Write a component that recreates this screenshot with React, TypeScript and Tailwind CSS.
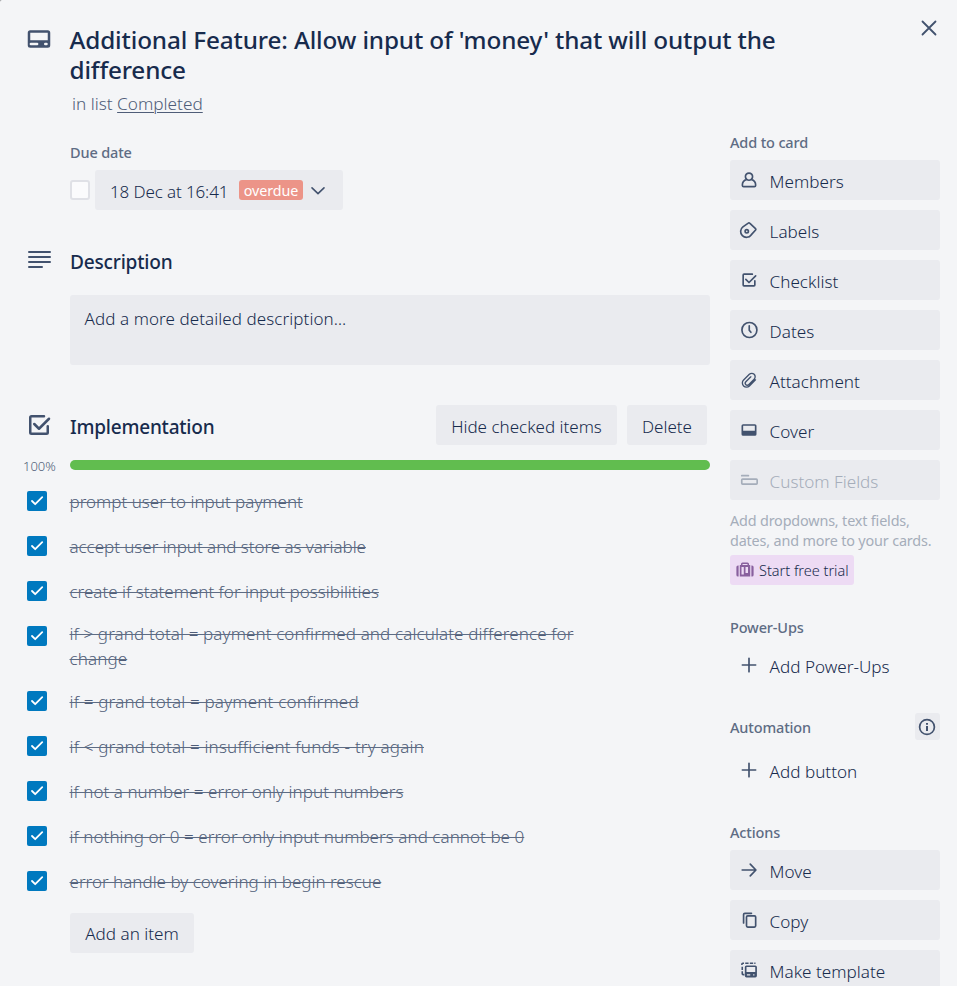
import type { ReactNode } from "react";

type IconProps = { size?: number; children: ReactNode; className?: string };

function Icon({ size = 20, children, className = "" }: IconProps) {
  return (
    <svg
      width={size}
      height={size}
      viewBox="0 0 24 24"
      fill="none"
      stroke="currentColor"
      strokeWidth="2"
      strokeLinecap="round"
      strokeLinejoin="round"
      className={"shrink-0 " + className}
    >
      {children}
    </svg>
  );
}

const cardShape = (
  <path
    fill="currentColor"
    stroke="none"
    fillRule="evenodd"
    d="M5 5h14a2 2 0 0 1 2 2v10a2 2 0 0 1-2 2H5a2 2 0 0 1-2-2V7a2 2 0 0 1 2-2zM5 7v6h14V7H5zM5.500 15a.9.9 0 0 0 0 2h5a.9.9 0 0 0 0-2h-5zM17 15a1 1 0 0 0 0 2h1a1 1 0 0 0 0-2h-1z"
  />
);

const checklistShape = (
  <>
    <path d="M16 5H6a1 1 0 0 0-1 1v12a1 1 0 0 0 1 1h12a1 1 0 0 0 1-1v-5" />
    <path d="M8.200 11.200l3.800 3.800 8-8" />
  </>
);

const icons = {
  members: (
    <path d="M9.300 11.300a4.300 4.300 0 1 1 5.400 0c3 .9 5.300 3.600 5.300 6.900 0 1-.6 1.800-1.600 1.800H5.600c-1 0-1.600-.8-1.600-1.800 0-3.300 2.300-6 5.300-6.900zm0 0c.8.7 1.700 1 2.700 1s1.900-.3 2.700-1" />
  ),
  labels: (
    <>
      <path d="M11.100 3.700a1.200 1.200 0 0 1 1.700 0l7 6.600a1.200 1.200 0 0 1 .1 1.700l-5.300 5.900a7 7 0 1 1-9.900-9.700z" />
      <circle cx="9.300" cy="13.600" r="2" />
    </>
  ),
  checklist: checklistShape,
  dates: (
    <>
      <circle cx="12.500" cy="12" r="9" />
      <path d="M12.300 7v5.200l2 2.600" />
    </>
  ),
  attachment: (
    <path
      strokeWidth="1.600"
      d="M19.800 11.800l-7.300 7.300a4.900 4.900 0 0 1-7 0 4.900 4.900 0 0 1 0-7l6.900-6.900a4.100 4.100 0 0 1 5.800 0 4.100 4.100 0 0 1 0 5.800l-6.600 6.600a2.400 2.400 0 0 1-3.400-3.400l6-6"
    />
  ),
  cover: (
    <path
      fill="currentColor"
      stroke="none"
      fillRule="evenodd"
      d="M5 5h14a2 2 0 0 1 2 2v10a2 2 0 0 1-2 2H5a2 2 0 0 1-2-2V7a2 2 0 0 1 2-2zM5 7v6h14V7H5z"
    />
  ),
  fields: (
    <>
      <path d="M3.300 6.800h8" />
      <rect x="3.300" y="11" width="18.500" height="6" rx="1" />
    </>
  ),
  plus: <path d="M12 4v16M4 12h16" />,
  move: <path d="M3.800 12H20M13.500 5l6.800 7-6.800 7" />,
  copy: (
    <>
      <path d="M5.500 15.500V5.500a1.500 1.500 0 0 1 1.500-1.500H15" />
      <rect x="9" y="7" width="11" height="13.500" rx="1.500" />
    </>
  ),
  template: (
    <>
      <path
        fill="currentColor"
        stroke="none"
        fillRule="evenodd"
        d="M9 6.500h10.500a2 2 0 0 1 2 2V19a2 2 0 0 1-2 2H9a2 2 0 0 1-2-2V8.500a2 2 0 0 1 2-2zM9 8.500V14.500h10.500V8.500H9zM9.500 17v1.500h4V17h-4zM17 17v1.500h1.500V17H17z"
      />
      <path strokeLinecap="butt" strokeWidth="1.900" d="M3.500 6V4.800a1 1 0 0 1 1-1h1.500M7.500 3.800h4M13 3.800h4M18.300 3.800h1.500M3.900 8v4M3.900 13.500v3a1 1 0 0 0 1 1H6.500" />
    </>
  ),
};

function SideButton({ icon, label, ghost, disabled }: { icon: keyof typeof icons; label: string; ghost?: boolean; disabled?: boolean }) {
  return (
    <div
      className={
        "flex h-10 w-full shrink-0 items-center rounded-[3px] pl-[9px] " +
        (ghost ? "" : "bg-[#eaebef] ") +
        (disabled ? "text-[#a5adba]" : "text-[#42526e]")
      }
    >
      <Icon>{icons[icon]}</Icon>
      <span
        className={
          "ml-[10.6px] pt-[3px] text-[17.1px] leading-[25px] font-light " +
          (disabled ? "text-[#a5adba]" : "text-[#172b4d]")
        }
      >
        {label}
      </span>
    </div>
  );
}

function SideHeading({ children }: { children: ReactNode }) {
  return (
    <h3 className="text-[14.5px] leading-5 font-medium tracking-[-0.15px] text-[#5e6c84]">{children}</h3>
  );
}

function GrayButton({ children, className = "" }: { children: ReactNode; className?: string }) {
  return (
    <div className={"flex h-10 items-center justify-center rounded-[3px] bg-[#eaebef] " + className}>
      <span className="pt-[3px] text-[17px] leading-[25px] font-light whitespace-nowrap">{children}</span>
    </div>
  );
}

type TodoItem = { lines: string[]; tracking?: string };

const todos: TodoItem[] = [
  { lines: ["prompt user to input payment"] },
  { lines: ["accept user input and store as variable"], tracking: "tracking-[-0.04px]" },
  { lines: ["create if statement for input possibilities"] },
  { lines: ["if > grand total = payment confirmed and calculate difference for", "change"], tracking: "tracking-[0.115px]" },
  { lines: ["if = grand total = payment confirmed"], tracking: "tracking-[0.19px]" },
  { lines: ["if < grand total = insufficient funds - try again"], tracking: "tracking-[0.19px]" },
  { lines: ["if not a number = error only input numbers"], tracking: "tracking-[0.04px]" },
  { lines: ["if nothing or 0 = error only input numbers and cannot be 0"], tracking: "tracking-[0.05px]" },
  { lines: ["error handle by covering in begin rescue"] },
];

function Todo({ lines, tracking = "" }: TodoItem) {
  const tall = lines.length > 1;
  return (
    <li className={"flex items-start " + (tall ? "h-[65px]" : "h-[45px]")}>
      <span className="mt-[10px] ml-[27px] flex size-5 shrink-0 items-center justify-center rounded-[2px] bg-[#0079bf] text-white">
        <svg width="20" height="20" viewBox="0 0 20 20" fill="none" stroke="currentColor" strokeWidth="1.8" strokeLinecap="round" strokeLinejoin="round">
          <path d="M5 10l3.200 3.200L15.200 6.200" />
        </svg>
      </span>
      <span
        className={
          "ml-[22.5px] text-[17px] leading-[25px] font-light whitespace-nowrap text-[#4f5d78] line-through decoration-[#5e6c84] decoration-1 " +
          (tall ? "pt-[5px] " : "pt-[8px] ") +
          tracking
        }
      >
        {lines.map((line) => (
          <span key={line} className="block">
            {line}
          </span>
        ))}
      </span>
    </li>
  );
}

export default function App() {
  return (
    <div className="h-[986px] w-[957px] overflow-hidden bg-[#8d8f92]">
      <div className="flex h-full flex-col rounded-tl-[2px] bg-[#f4f5f7] font-['Noto_Sans',sans-serif] text-[#172b4d]">
        <header className="flex h-[132px] shrink-0 items-start">
          <Icon size={30} className="mt-6 ml-6 text-[#42526e]">
            {cardShape}
          </Icon>
          <div className="ml-[15.5px] w-[830px] pt-[25px]">
            <h1 className="text-[24.3px] leading-[30px] font-medium tracking-[-0.14px]">
              Additional Feature: Allow input of 'money' that will output the
              <br />
              difference
            </h1>
            <p className="mt-[6px] ml-[2.5px] text-[17.2px] leading-[25px] font-light text-[#4f5d78]">
              in list <span className="underline decoration-1 underline-offset-2">Completed</span>
            </p>
          </div>
          <svg width="16" height="16" viewBox="0 0 16 16" className="mt-5 ml-[21.5px] shrink-0 text-[#42526e]" fill="none" stroke="currentColor" strokeWidth="1.8" strokeLinecap="round">
            <path d="M1.500 1.500l13 13M14.500 1.500l-13 13" />
          </svg>
        </header>

        <div className="flex min-h-0 flex-1">
          <main className="w-[710px] shrink-0">
            <section className="pt-[10px] pl-[70px]">
              <SideHeading>Due date</SideHeading>
              <div className="mt-2 flex items-center">
                <span className="size-5 rounded-[3px] border-2 border-[#dfe1e6] bg-[#fafbfc]" />
                <div className="ml-[5px] flex h-10 w-[248px] items-center rounded-[3px] bg-[#eaebef] pl-[15px]">
                  <span className="w-[129px] pt-[3px] text-[17px] leading-[25px] font-light tracking-[-0.12px]">18 Dec at 16:41</span>
                  <span className="flex h-5 w-16 items-center justify-center rounded-[3px] bg-[#ec9488] text-[14.3px] leading-5 tracking-[-0.1px] text-white">
                    <span className="pt-[1px]">overdue</span>
                  </span>
                  <svg width="16" height="10" viewBox="0 0 16 10" className="mt-[1px] ml-[7px]" fill="none" stroke="#42526e" strokeWidth="1.600" strokeLinecap="round" strokeLinejoin="round">
                    <path d="M2 1.800l6 5.800 6-5.800" />
                  </svg>
                </div>
              </div>
            </section>

            <section className="mt-10">
              <div className="flex h-[45px] items-start">
                <div className="mt-[1px] ml-7 flex w-[23px] flex-col gap-[3px] text-[#42526e]">
                  <span className="h-[2px] rounded-full bg-current" />
                  <span className="h-[2px] rounded-full bg-current" />
                  <span className="h-[2px] rounded-full bg-current" />
                  <span className="h-[2px] w-[15px] rounded-full bg-current" />
                </div>
                <h2 className="ml-[19px] text-[19.1px] leading-[25px] font-medium tracking-[-0.2px]">Description</h2>
              </div>
              <div className="ml-[70px] h-[70px] rounded-[3px] bg-[#eaebef] px-[14.5px] pt-[11px] text-[17px] leading-[25px] font-light tracking-[0.08px]">
                Add a more detailed description…
              </div>
            </section>

            <section className="mt-10">
              <div className="flex h-10 items-center">
                <Icon size={30} className="ml-6 text-[#42526e]">
                  {checklistShape}
                </Icon>
                <h2 className="ml-4 flex-1 pt-[4px] text-[19px] leading-[25px] font-medium tracking-[-0.22px]">Implementation</h2>
                <GrayButton className="w-[181px]">Hide checked items</GrayButton>
                <GrayButton className="mr-[3px] ml-[10px] w-20">Delete</GrayButton>
              </div>
              <div className="mt-[10px] flex h-[20px] items-center">
                <span className="w-[70px] pt-px pl-[23px] text-[13px] leading-5 font-light text-[#4f5d78]">100%</span>
                <div className="h-[10px] flex-1 rounded-full bg-[#61bd4f]" />
              </div>
              <ul className="mt-[6px]">
                {todos.map((todo) => (
                  <Todo key={todo.lines[0]} {...todo} />
                ))}
              </ul>
              <div className="mt-[7px] ml-[70px] flex h-10 w-[124px] items-center justify-center rounded-[3px] bg-[#eaebef]">
                <span className="pt-[1px] text-[17.1px] leading-[25px] font-light whitespace-nowrap">Add an item</span>
              </div>
            </section>
          </main>

          <aside className="ml-5 w-[210px] shrink-0">
            <SideHeading>Add to card</SideHeading>
            <div className="mt-2 flex flex-col gap-[10px]">
              <SideButton icon="members" label="Members" />
              <SideButton icon="labels" label="Labels" />
              <SideButton icon="checklist" label="Checklist" />
              <SideButton icon="dates" label="Dates" />
              <SideButton icon="attachment" label="Attachment" />
              <SideButton icon="cover" label="Cover" />
              <SideButton icon="fields" label="Custom Fields" disabled />
            </div>
            <p className="mt-[11px] text-[14.4px] leading-5 tracking-[-0.17px] whitespace-nowrap text-[#a5adba]">
              Add dropdowns, text fields,
              <br />
              dates, and more to your cards.
            </p>
            <div className="mt-[4px] flex h-[30px] w-[124px] items-center rounded-[3px] bg-[#eddbf4] pl-[6px]">
              <svg width="18" height="16" viewBox="0 0 18 16" fill="#89609e" className="shrink-0">
                <path d="M2.600 3.500v11H2A1.600 1.600 0 0 1 .4 12.900V5.100A1.600 1.600 0 0 1 2 3.500zM15.400 3.500v11h.6a1.600 1.600 0 0 0 1.600-1.600V5.100A1.600 1.600 0 0 0 16 3.500z" />
                <path
                  fillRule="evenodd"
                  d="M5 3V2a1.500 1.500 0 0 1 1.500-1.500h5A1.500 1.500 0 0 1 13 2v1h1.200v11.500H3.800V3zM6.500 3h5V2h-5zM5.500 5v7.500h2.300V5zM9.500 5v6h2.500V5z"
                />
              </svg>
              <span className="ml-[5px] text-[14.5px] leading-5 font-light tracking-[-0.02px] whitespace-nowrap">Start free trial</span>
            </div>

            <div className="mt-8">
              <SideHeading>Power-Ups</SideHeading>
            </div>
            <div className="mt-2">
              <SideButton icon="plus" label="Add Power-Ups" ghost />
            </div>

            <div className="mt-7 flex h-[27px] items-center justify-between">
              <div className="pt-[1px]">
                <SideHeading>Automation</SideHeading>
              </div>
              <span className="flex h-[27px] w-[25px] items-center rounded-[3px] bg-[#eaebef] pl-[3px] text-[#42526e]">
                <svg width="18" height="18" viewBox="0 0 18 18" fill="none" stroke="currentColor" strokeWidth="1.700">
                  <circle cx="9" cy="9" r="7.400" />
                  <path d="M9 8v5M9 5v1.700" strokeWidth="2" />
                </svg>
              </span>
            </div>
            <div className="mt-[10px]">
              <SideButton icon="plus" label="Add button" ghost />
            </div>

            <div className="mt-8">
              <SideHeading>Actions</SideHeading>
            </div>
            <div className="mt-2 flex flex-col gap-[10px]">
              <SideButton icon="move" label="Move" />
              <SideButton icon="copy" label="Copy" />
              <SideButton icon="template" label="Make template" />
            </div>
          </aside>
        </div>
      </div>
    </div>
  );
}
